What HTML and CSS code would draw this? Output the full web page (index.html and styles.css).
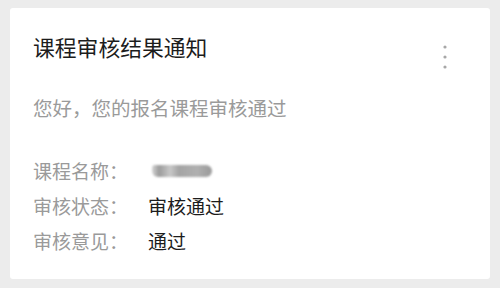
FILE: index.html
```html
<!DOCTYPE html>
<html lang="zh">
<head>
<meta charset="utf-8">
<link rel="stylesheet" href="styles.css">
</head>
<body>
<div class="card">
  <div class="header">
    <div class="title">课程审核结果通知</div>
    <svg class="more" width="4" height="24" viewBox="0 0 4 24">
      <circle cx="2" cy="2" r="1.6" fill="#a8a8a8"/>
      <circle cx="2" cy="12" r="1.6" fill="#a8a8a8"/>
      <circle cx="2" cy="22" r="1.6" fill="#a8a8a8"/>
    </svg>
  </div>
  <div class="greeting">您好，您的报名课程审核通过</div>
  <div class="rows">
    <div class="row"><span class="label">课程名称：</span><span class="value"><span class="blur"></span></span></div>
    <div class="row"><span class="label">审核状态：</span><span class="value">审核通过</span></div>
    <div class="row"><span class="label">审核意见：</span><span class="value">通过</span></div>
  </div>
</div>
</body>
</html>
```
FILE: styles.css
```css
html, body {
  margin: 0;
  padding: 0;
}
body {
  width: 500px;
  height: 288px;
  background: #ececec;
  font-family: "Noto Sans CJK SC", "Noto Sans", sans-serif;
  padding: 8px 10px 9px 10px;
  box-sizing: border-box;
}
.card {
  background: #ffffff;
  border-radius: 3px;
  height: 271px;
  box-sizing: border-box;
  padding: 25px 43px 0 23px;
}
.header {
  display: flex;
  justify-content: space-between;
  align-items: flex-start;
  height: 28px;
}
.title {
  font-size: 21.8px;
  line-height: 28px;
  color: #1c1c1c;
}
.more {
  margin-top: 12px;
}
.greeting {
  margin-top: 33px;
  font-size: 19.5px;
  line-height: 28px;
  color: #9a9a9a;
}
.rows {
  margin-top: 31px;
}
.row {
  display: flex;
  font-size: 19px;
  line-height: 35px;
  height: 35px;
}
.label {
  width: 115px;
  color: #9a9a9a;
}
.value {
  color: #1c1c1c;
  display: flex;
  align-items: center;
}
.blur {
  display: block;
  width: 60px;
  height: 12px;
  margin-left: 4px;
  border-radius: 3px 6px 6px 6px;
  background: linear-gradient(90deg, #d4d4d4 0%, #9c9c9c 12%, #c8c8c8 30%, #a4a4a4 45%, #b0b0b0 75%, #9a9a9a 100%);
  filter: blur(1.2px);
}
```
